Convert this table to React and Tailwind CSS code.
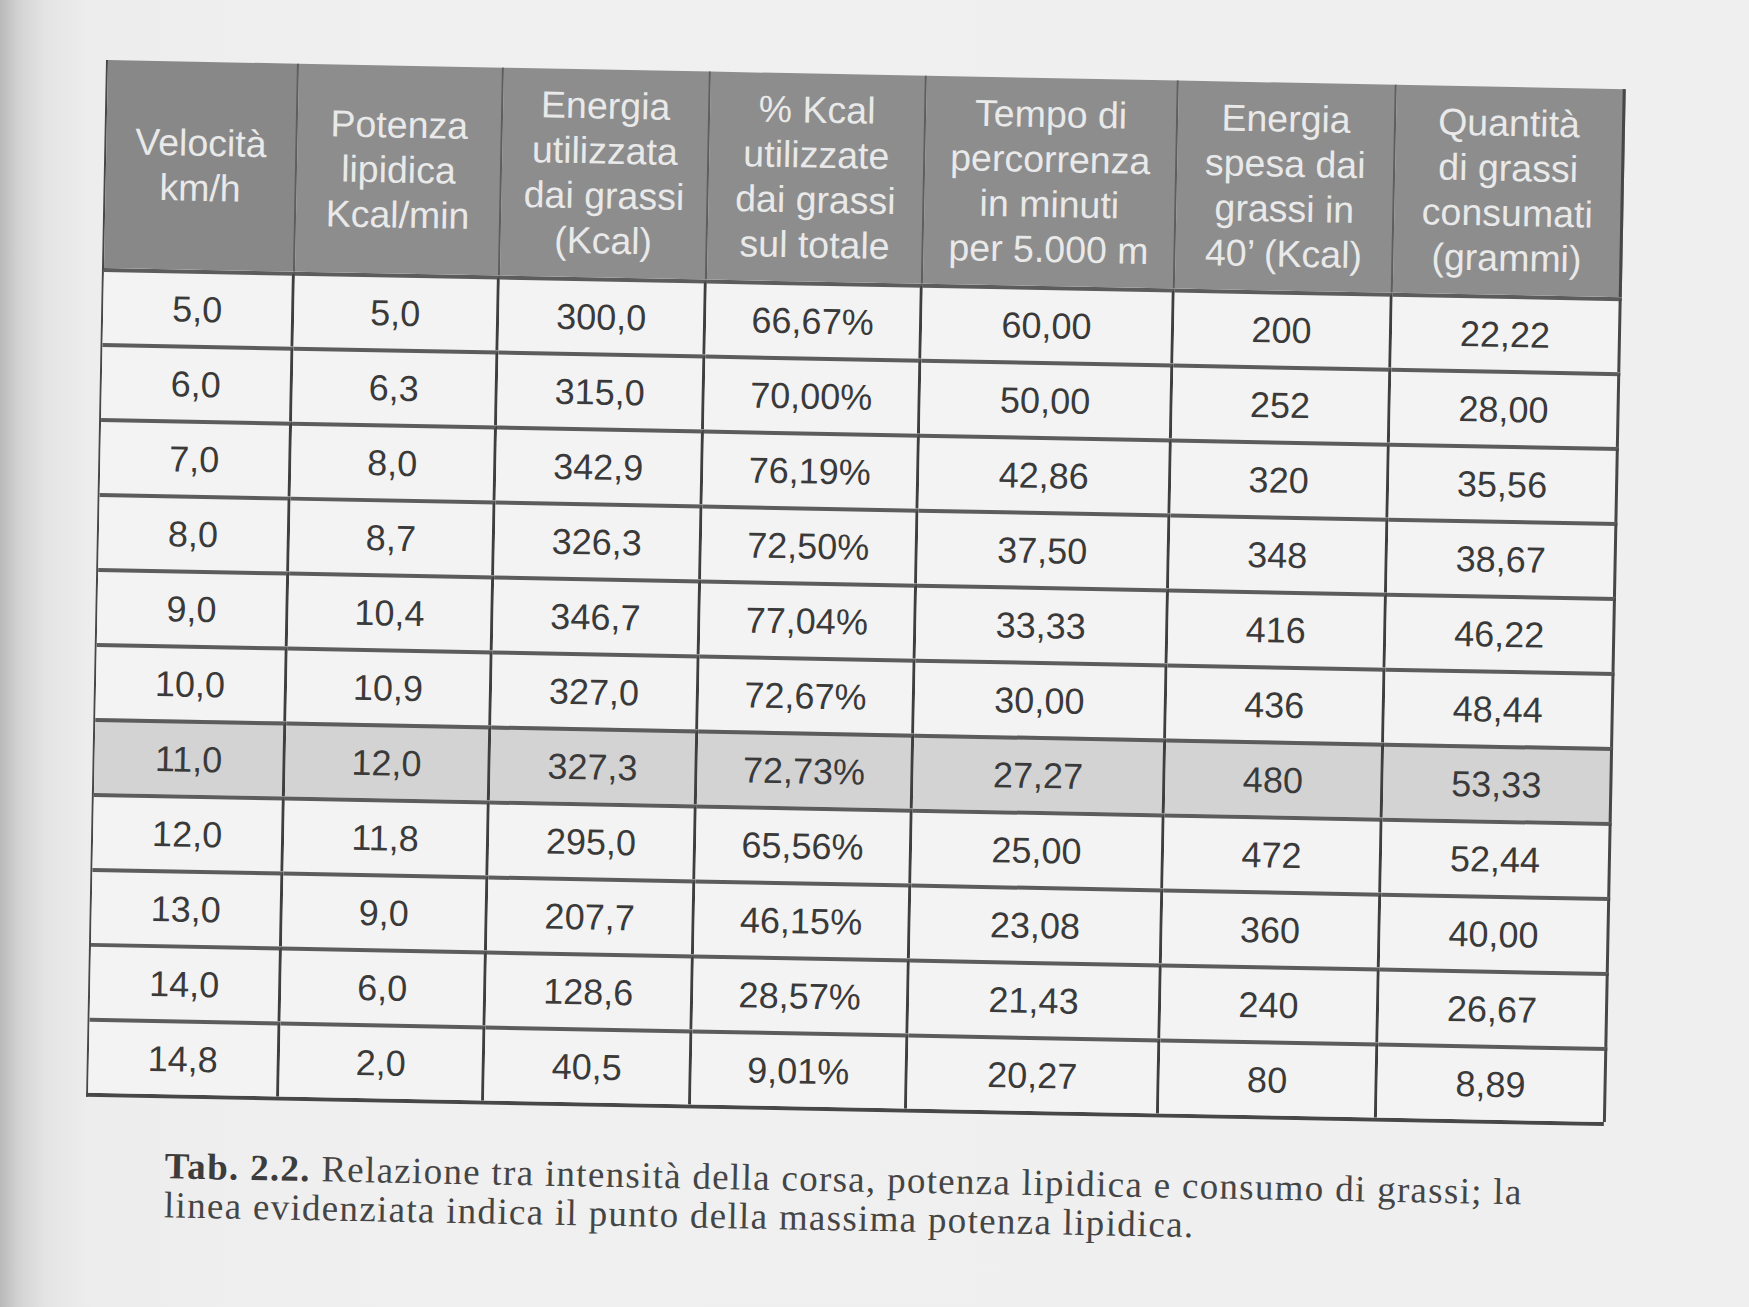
import React from "react";

const headers = [
  ["Velocità", "km/h"],
  ["Potenza", "lipidica", "Kcal/min"],
  ["Energia", "utilizzata", "dai grassi", "(Kcal)"],
  ["% Kcal", "utilizzate", "dai grassi", "sul totale"],
  ["Tempo di", "percorrenza", "in minuti", "per 5.000 m"],
  ["Energia", "spesa dai", "grassi in", "40’ (Kcal)"],
  ["Quantità", "di grassi", "consumati", "(grammi)"],
];

const rows = [
  ["5,0", "5,0", "300,0", "66,67%", "60,00", "200", "22,22"],
  ["6,0", "6,3", "315,0", "70,00%", "50,00", "252", "28,00"],
  ["7,0", "8,0", "342,9", "76,19%", "42,86", "320", "35,56"],
  ["8,0", "8,7", "326,3", "72,50%", "37,50", "348", "38,67"],
  ["9,0", "10,4", "346,7", "77,04%", "33,33", "416", "46,22"],
  ["10,0", "10,9", "327,0", "72,67%", "30,00", "436", "48,44"],
  ["11,0", "12,0", "327,3", "72,73%", "27,27", "480", "53,33"],
  ["12,0", "11,8", "295,0", "65,56%", "25,00", "472", "52,44"],
  ["13,0", "9,0", "207,7", "46,15%", "23,08", "360", "40,00"],
  ["14,0", "6,0", "128,6", "28,57%", "21,43", "240", "26,67"],
  ["14,8", "2,0", "40,5", "9,01%", "20,27", "80", "8,89"],
];

export default function App() {
  return (
    <div className="relative min-h-[1307px] w-full overflow-hidden bg-[linear-gradient(to_right,#b9b9b9_0px,#d2d2d2_18px,#e4e4e4_45px,#ededed_90px,#f0f0f0_400px,#efefef_100%)]">
      <div className="pl-[106px] pt-[60px]">
        <div className="w-[1518px] origin-top-left rotate-[1.1deg]">
          <div
            className="grid grid-cols-[191px_205px_207px_216px_252px_218px_229px] grid-rows-[208px_repeat(11,75px)] border-b-[4px] border-l-[2px] border-[#474747] bg-[#f3f3f3]"
            style={{ fontFamily: '"Liberation Sans", Arial, sans-serif' }}
          >
            {headers.map((lines, i) => (
              <div
                key={"h" + i}
                className={
                  "flex flex-col items-center justify-center text-[37.5px] leading-[45px] text-[#e9e9e9] " +
                  (i === 6 ? "border-r-[3px] border-[#474747]" : "border-r-[2px] border-[#5e5e5e]") +
                  (i === 0 ? " bg-[#888888]" : " bg-[#8d8d8d]")
                }
              >
                {lines.map((l, j) => (
                  <span key={j} className="whitespace-nowrap">
                    {l}
                  </span>
                ))}
              </div>
            ))}
            {rows.map((r, ri) =>
              r.map((c, ci) => (
                <div
                  key={ri + "-" + ci}
                  className={
                    "flex items-center justify-center border-t-[4px] border-t-[#5c5c5c] text-[36px] text-[#3a3a3a] " +
                    (ci === 6 ? "border-r-[3px] border-r-[#474747] " : "border-r-[3px] border-r-[#3f3f3f] ") +
                    (ri === 6 ? "bg-[#d3d3d3]" : "bg-[#f3f3f3]")
                  }
                >
                  {c}
                </div>
              ))
            )}
          </div>
          <div
            className="mt-[48px] pl-[80px] text-[37px] leading-[39px] tracking-[1.3px] text-[#454545]"
            style={{ fontFamily: '"Liberation Serif", "Times New Roman", serif' }}
          >
            <div className="whitespace-nowrap">
              <span className="font-bold text-[#3c3c3c]">Tab. 2.2.</span> Relazione tra intensità della corsa, potenza lipidica e consumo di grassi; la
            </div>
            <div className="whitespace-nowrap">linea evidenziata indica il punto della massima potenza lipidica.</div>
          </div>
        </div>
      </div>
    </div>
  );
}
